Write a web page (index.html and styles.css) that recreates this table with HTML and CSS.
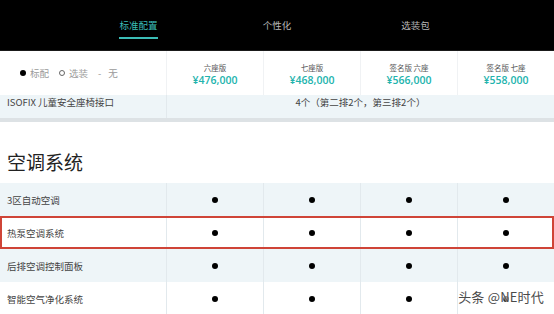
FILE: index.html
```html
<!DOCTYPE html>
<html lang="zh">
<head>
<meta charset="utf-8">
<link rel="stylesheet" href="styles.css">
</head>
<body>
<div class="page">
  <nav class="tabs">
    <div class="tab active"><span>标准配置</span></div>
    <div class="tab"><span>个性化</span></div>
    <div class="tab"><span>选装包</span></div>
  </nav>
  <div class="grid head">
    <div class="cell label legend">
      <span class="dot"></span><span>标配</span>
      <span class="ring"></span><span>选装</span>
      <span class="dash">-</span><span>无</span>
    </div>
    <div class="cell trim"><span class="trim-name">六座版</span><span class="price">¥476,000</span></div>
    <div class="cell trim"><span class="trim-name">七座版</span><span class="price">¥468,000</span></div>
    <div class="cell trim"><span class="trim-name">签名版 六座</span><span class="price">¥566,000</span></div>
    <div class="cell trim"><span class="trim-name">签名版 七座</span><span class="price">¥558,000</span></div>
  </div>
  <div class="grid row tint clipped">
    <div class="cell label">ISOFIX 儿童安全座椅接口</div>
    <div class="cell span4">4个（第二排2个，第三排2个）</div>
  </div>
  <div class="band"></div>
  <h2 class="section-title">空调系统</h2>
  <div class="grid row tint">
    <div class="cell label">3区自动空调</div>
    <div class="cell"><span class="dot"></span></div>
    <div class="cell"><span class="dot"></span></div>
    <div class="cell"><span class="dot"></span></div>
    <div class="cell"><span class="dot"></span></div>
  </div>
  <div class="grid row highlight">
    <div class="cell label">热泵空调系统</div>
    <div class="cell"><span class="dot"></span></div>
    <div class="cell"><span class="dot"></span></div>
    <div class="cell"><span class="dot"></span></div>
    <div class="cell"><span class="dot"></span></div>
  </div>
  <div class="grid row tint">
    <div class="cell label">后排空调控制面板</div>
    <div class="cell"><span class="dot"></span></div>
    <div class="cell"><span class="dot"></span></div>
    <div class="cell"><span class="dot"></span></div>
    <div class="cell"><span class="dot"></span></div>
  </div>
  <div class="grid row">
    <div class="cell label">智能空气净化系统</div>
    <div class="cell"><span class="dot"></span></div>
    <div class="cell"><span class="dot"></span></div>
    <div class="cell"><span class="dot"></span></div>
    <div class="cell"><span class="dot"></span></div>
  </div>
  <div class="watermark">头条 @NE时代</div>
</div>
</body>
</html>
```
FILE: styles.css
```css
* { box-sizing: border-box; margin: 0; padding: 0; }
html, body { width: 554px; height: 314px; overflow: hidden; background: #fff; }
body {
  font-family: "Noto Sans CJK SC", "Noto Sans", sans-serif;
  color: #333;
}
.page { position: relative; width: 554px; height: 314px; overflow: hidden; }

.tabs {
  height: 51px;
  background: #000;
  display: flex;
  justify-content: center;
  border-bottom: 1px solid #1a1a1a;
}
.tab {
  width: 138.5px;
  display: flex;
  justify-content: center;
  padding-top: 16px;
  font-size: 9.5px;
  color: #b8b8b8;
}
.tab span { display: block; height: 23px; line-height: 18px; }
.tab.active span { color: #3bbdb6; border-bottom: 2px solid #3bbdb6; }

.grid {
  display: grid;
  grid-template-columns: 166px repeat(4, 1fr);
}
.cell {
  border-left: 1px solid #e9edf0;
  display: flex;
  align-items: center;
  justify-content: center;
  font-size: 9.5px;
  color: #444;
}
.cell.label {
  border-left: none;
  justify-content: flex-start;
  padding-left: 7px;
}
.head { height: 44px; background: #fff; }
.head .cell { border-left-color: #f0f2f4; }
.legend { gap: 4px; padding-left: 20px !important; color: #9a9a9a; font-size: 9.5px; }
.legend .ring {
  width: 6px; height: 6px; border: 1px solid #666; border-radius: 50%; margin-left: 6px;
}
.legend .dash { margin-left: 6px; margin-right: 3px; }
.legend .dot { width: 6px; height: 6px; }
.trim { flex-direction: column; padding-top: 2px; }
.trim-name { font-size: 7.5px; line-height: 11px; color: #555; }
.price {
  font-family: "Open Sans", "Noto Sans", sans-serif;
  font-size: 10.5px;
  line-height: 14px;
  font-weight: 600;
  color: #22b3ad;
}

.row { height: 33px; }
.tint { background: #eef5f8; }
.row .cell { border-left-color: #e2e9ed; }
.row.clipped { height: 23px; overflow: hidden; }
.row.clipped .cell { align-items: flex-start; line-height: 12px; font-size: 9.5px; padding-top: 1px; }
.span4 { grid-column: 2 / 6; border-left: 1px solid #e2e9ed; }

.band { height: 4px; background: #dde2e5; }
.section-title {
  font-size: 19px;
  font-weight: 400;
  color: #222;
  line-height: 24px;
  padding: 28px 7px 9px;
}

.dot {
  display: block;
  width: 6px;
  height: 6px;
  border-radius: 50%;
  background: #000;
}
.highlight { outline: 2px solid #cf4437; outline-offset: -2px; }

.watermark {
  position: absolute;
  right: 10px;
  bottom: 8px;
  font-size: 13px;
  color: #4a4a4a;
  text-shadow: 0 0 2px #fff, 0 0 2px #fff;
  letter-spacing: 0.2px;
}
```
